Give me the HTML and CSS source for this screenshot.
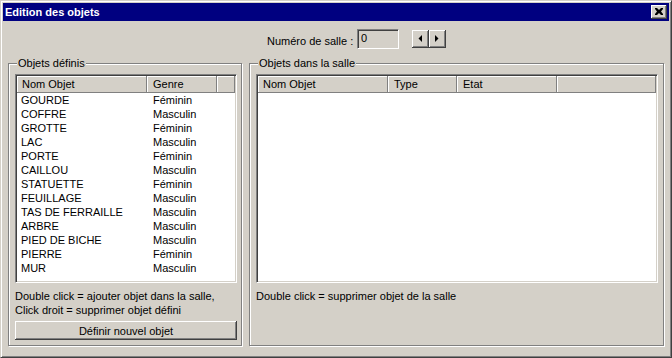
FILE: index.html
```html
<!DOCTYPE html>
<html lang="fr">
<head>
  <meta charset="UTF-8" />
  <title>Edition des objets</title>
  <link rel="stylesheet" href="styles.css">
</head>
<body>
  <div class="window">
    <div class="titlebar">
      <span class="title">Edition des objets</span>
      <button class="raised close" title="Fermer">
        <svg width="8" height="7" viewBox="0 0 8 7"><path d="M0 0h2l2 2 2-2h2v1l-2 2.5 2 2.5v1h-2l-2-2-2 2h-2v-1l2-2.5-2-2.5z" fill="#000"/></svg>
      </button>
    </div>

    <div class="room-row">
      <span class="room-label">Numéro de salle :</span>
      <input class="field" type="text" value="0" readonly />
      <div class="spin">
        <button class="raised spin-btn"><svg width="4" height="7" viewBox="0 0 4 7"><polygon points="4,0 4,7 0.5,3.5" fill="#000"/></svg></button>
        <button class="raised spin-btn"><svg width="4" height="7" viewBox="0 0 4 7"><polygon points="0,0 0,7 3.5,3.5" fill="#000"/></svg></button>
      </div>
    </div>

    <div class="groups">
      <fieldset class="group">
        <legend>Objets définis</legend>
        <div class="listview">
          <div class="lv-header">
            <span class="lv-col col-name">Nom Objet</span>
            <span class="lv-col col-genre">Genre</span>
            <span class="lv-col lv-fill"></span>
          </div>
          <ul class="lv-rows" id="objList"></ul>
        </div>
        <p class="hint">Double click = ajouter objet dans la salle,<br>Click droit = supprimer objet défini</p>
        <button class="raised push">Définir nouvel objet</button>
      </fieldset>

      <fieldset class="group">
        <legend>Objets dans la salle</legend>
        <div class="listview">
          <div class="lv-header">
            <span class="lv-col col-name">Nom Objet</span>
            <span class="lv-col col-type">Type</span>
            <span class="lv-col col-etat">Etat</span>
            <span class="lv-col lv-fill"></span>
          </div>
          <ul class="lv-rows"></ul>
        </div>
        <p class="hint">Double click = supprimer objet de la salle</p>
      </fieldset>
    </div>
  </div>

  <script>
    const objets = [
      ['GOURDE', 'Féminin'], ['COFFRE', 'Masculin'], ['GROTTE', 'Féminin'],
      ['LAC', 'Masculin'], ['PORTE', 'Féminin'], ['CAILLOU', 'Masculin'],
      ['STATUETTE', 'Féminin'], ['FEUILLAGE', 'Masculin'], ['TAS DE FERRAILLE', 'Masculin'],
      ['ARBRE', 'Masculin'], ['PIED DE BICHE', 'Masculin'], ['PIERRE', 'Féminin'],
      ['MUR', 'Masculin']
    ];
    const list = document.getElementById('objList');
    objets.forEach(([nom, genre]) => {
      const li = document.createElement('li');
      li.innerHTML = `<span class="cell-name">${nom}</span><span class="cell-genre">${genre}</span>`;
      list.appendChild(li);
    });
  </script>
</body>
</html>
```

FILE: styles.css
```css
body { margin:0; background:#d4d0c8; font:11px "Liberation Sans", Arial, sans-serif; color:#000; }
.window { width:672px; height:358px; box-sizing:border-box; background:#d4d0c8; border:1px solid; border-color:#d4d0c8 #404040 #404040 #d4d0c8; box-shadow:inset 1px 1px #fff, inset -1px -1px #808080; padding:2px; }

.raised { background:#d4d0c8; border:none; padding:0; box-shadow:inset -1px -1px #404040, inset 1px 1px #fff, inset -2px -2px #808080; font:inherit; color:#000; }

.titlebar { height:18px; background:#000080; color:#fff; display:flex; align-items:center; justify-content:space-between; padding:0 2px; }
.title { font-weight:bold; font-size:11px; }
.close { width:16px; height:14px; display:flex; align-items:center; justify-content:center; padding:0 1px 1px 0; }

.room-row { display:flex; align-items:center; height:20px; margin-top:8px; padding-left:264px; }
.room-label { width:90px; padding-top:4px; }
.field { width:42px; height:20px; box-sizing:border-box; margin:0; padding:0 3px 2px; font:inherit; color:#000; background:#d4d0c8; border:1px solid; border-color:#808080 #fff #fff #808080; box-shadow:inset 1px 1px #404040, inset -1px -1px #d4d0c8; outline:none; }
.spin { display:flex; margin-left:13px; }
.spin-btn { width:17px; height:18px; display:flex; align-items:center; justify-content:center; padding:0 1px 1px 0; }

.groups { display:grid; grid-template-columns:234px 415px; column-gap:7px; margin:8px 0 0 5px; height:289px; }
.group { margin:0; min-width:0; border:1px solid #808080; box-shadow:inset 1px 1px #fff, 1px 1px #fff; padding:4px 5px 5px 6px; }
.group:first-child { padding-right:4px; }
.group legend { padding:0 1px; margin-left:2px; background:#d4d0c8; line-height:13px; }

.listview { height:209px; box-sizing:border-box; background:#fff; border:1px solid; border-color:#808080 #fff #fff #808080; box-shadow:inset 1px 1px #404040, inset -1px -1px #d4d0c8; padding:1px; overflow:hidden; }
.lv-header { display:flex; height:17px; }
.lv-col { box-sizing:border-box; height:17px; line-height:16px; padding-left:6px; background:#d4d0c8; white-space:nowrap; box-shadow:inset -1px -1px #808080, inset 1px 1px #fff; }
.lv-col.col-name { width:130px; padding-left:5px; }
.col-genre { width:70px; }
.col-type { width:69px; }
.col-etat { width:100px; }
.lv-fill { flex:1; }
.lv-rows { list-style:none; margin:0; padding:0; }
.lv-rows li { display:flex; height:14px; line-height:14px; white-space:nowrap; }
.cell-name { width:130px; padding-left:4px; box-sizing:border-box; }
.cell-genre { padding-left:6px; }

.hint { margin:6px 0 0; line-height:14px; }
.push { display:block; width:100%; height:19px; margin-top:4px; text-align:center; }
```
